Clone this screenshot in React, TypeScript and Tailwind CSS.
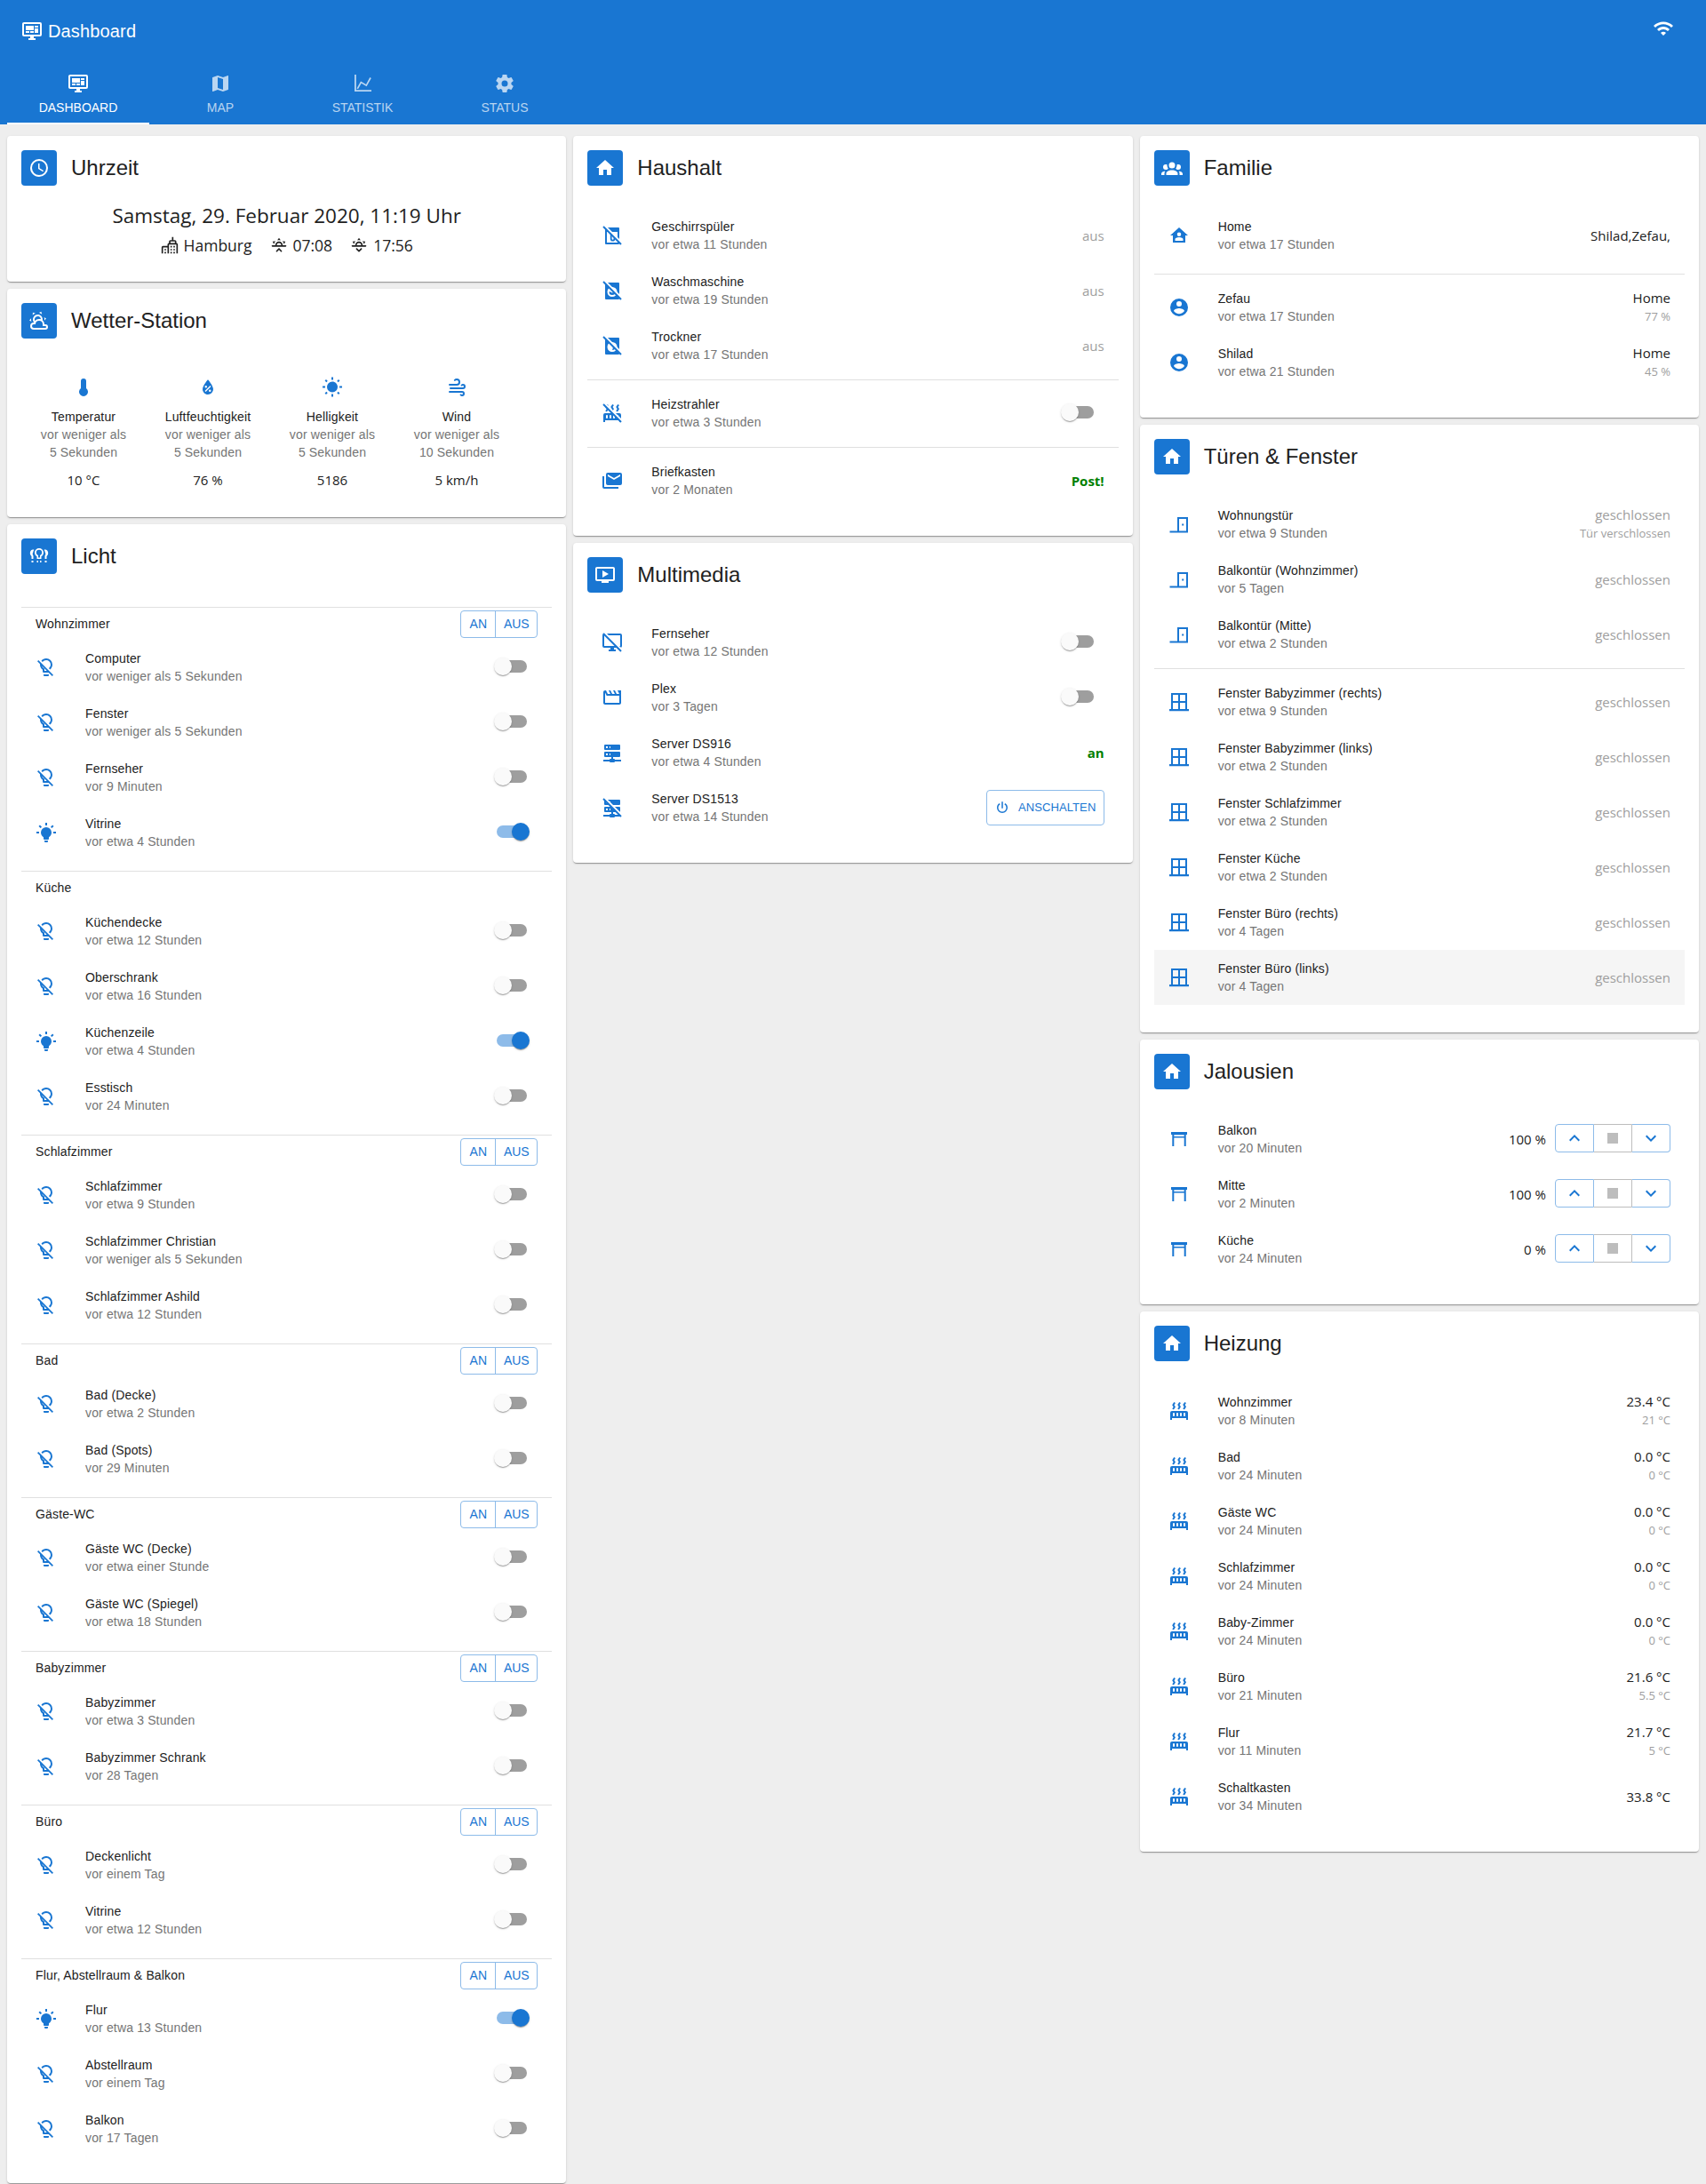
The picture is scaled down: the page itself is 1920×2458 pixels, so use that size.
import React from 'react'

const P = {
  dashboard: 'M21,16V4H3V16H21M21,2A2,2 0 0,1 23,4V16A2,2 0 0,1 21,18H14V20H16V22H8V20H10V18H3C1.89,18 1,17.1 1,16V4C1,2.89 1.89,2 3,2H21M5,6H14V11H5V6M15,6H19V8H15V6M19,9V14H15V9H19M5,12H9V14H5V12M10,12H14V14H10V12Z',
  map: 'M15,19L9,16.89V5L15,7.11M20.5,3C20.44,3 20.39,3 20.34,3L15,5.1L9,3L3.36,4.9C3.15,4.97 3,5.15 3,5.38V20.5A0.5,0.5 0 0,0 3.5,21C3.55,21 3.61,21 3.66,20.97L9,18.9L15,21L20.64,19.1C20.85,19 21,18.85 21,18.62V3.5A0.5,0.5 0 0,0 20.5,3Z',
  chart: 'M3,2H4.8V19.2H22V21H3V2M5.5,17.4L10,9.5L16,13L20.3,5L21.8,5.9L16.6,15.2L10.7,11.8L7,18.3L5.5,17.4Z',
  cog: 'M12,15.5A3.5,3.5 0 0,1 8.5,12A3.5,3.5 0 0,1 12,8.5A3.5,3.5 0 0,1 15.5,12A3.5,3.5 0 0,1 12,15.5M19.43,12.97C19.47,12.65 19.5,12.33 19.5,12C19.5,11.67 19.47,11.34 19.43,11L21.54,9.37C21.73,9.22 21.78,8.95 21.66,8.73L19.66,5.27C19.54,5.05 19.27,4.96 19.05,5.05L16.56,6.05C16.04,5.66 15.5,5.32 14.87,5.07L14.5,2.42C14.46,2.18 14.25,2 14,2H10C9.75,2 9.54,2.18 9.5,2.42L9.13,5.07C8.5,5.32 7.96,5.66 7.44,6.05L4.95,5.05C4.73,4.96 4.46,5.05 4.34,5.27L2.34,8.73C2.21,8.95 2.27,9.22 2.46,9.37L4.57,11C4.53,11.34 4.5,11.67 4.5,12C4.5,12.33 4.53,12.65 4.57,12.97L2.46,14.63C2.27,14.78 2.21,15.05 2.34,15.27L4.34,18.73C4.46,18.95 4.73,19.03 4.95,18.95L7.44,17.94C7.96,18.34 8.5,18.68 9.13,18.93L9.5,21.58C9.54,21.82 9.75,22 10,22H14C14.25,22 14.46,21.82 14.5,21.58L14.87,18.93C15.5,18.67 16.04,18.34 16.56,17.94L19.05,18.95C19.27,19.03 19.54,18.95 19.66,18.73L21.66,15.27C21.78,15.05 21.73,14.78 21.54,14.63L19.43,12.97Z',
  wifi: 'M1 9l2 2c4.97-4.97 13.03-4.97 18 0l2-2C16.93 2.93 7.08 2.93 1 9zm8 8l3 3 3-3c-1.65-1.66-4.34-1.66-6 0zm-4-4l2 2c2.76-2.76 7.24-2.76 10 0l2-2C15.14 9.14 8.87 9.14 5 13z',
  clock: 'M12,20A8,8 0 0,0 20,12A8,8 0 0,0 12,4A8,8 0 0,0 4,12A8,8 0 0,0 12,20M12,2A10,10 0 0,1 22,12A10,10 0 0,1 12,22C6.47,22 2,17.5 2,12A10,10 0 0,1 12,2M12.5,7V12.25L17,14.92L16.25,16.15L11,13V7H12.5Z',
  home: 'M10,20V14H14V20H19V12H22L12,3L2,12H5V20H10Z',
  person: 'M12,19.2C9.5,19.2 7.29,17.92 6,16C6.03,14 10,12.9 12,12.9C14,12.9 17.97,14 18,16C16.71,17.92 14.5,19.2 12,19.2M12,5A3,3 0 0,1 15,8A3,3 0 0,1 12,11A3,3 0 0,1 9,8A3,3 0 0,1 12,5M12,2A10,10 0 0,0 2,12A10,10 0 0,0 12,22A10,10 0 0,0 22,12A10,10 0 0,0 12,2Z',
  group: 'M12,5.5A3.5,3.5 0 0,1 15.5,9A3.5,3.5 0 0,1 12,12.5A3.5,3.5 0 0,1 8.5,9A3.5,3.5 0 0,1 12,5.5M5,8C5.56,8 6.08,8.15 6.53,8.42C6.38,9.85 6.8,11.27 7.66,12.38C7.16,13.34 6.16,14 5,14A3,3 0 0,1 2,11A3,3 0 0,1 5,8M19,8A3,3 0 0,1 22,11A3,3 0 0,1 19,14C17.84,14 16.84,13.34 16.34,12.38C17.2,11.27 17.62,9.85 17.47,8.42C17.92,8.15 18.44,8 19,8M5.5,18.25C5.5,16.18 8.41,14.5 12,14.5C15.59,14.5 18.5,16.18 18.5,18.25V20H5.5V18.25M0,20V18.5C0,17.11 1.89,15.94 4.45,15.6C3.86,16.28 3.5,17.22 3.5,18.25V20H0M24,20H20.5V18.25C20.5,17.22 20.14,16.28 19.55,15.6C22.11,15.94 24,17.11 24,18.5V20Z',
  homeAccount: 'M12 3L2 12h3v8h14v-8h3L12 3zM12 8.5a2.25 2.25 0 1 1 0 4.5 2.25 2.25 0 0 1 0-4.5zM12 14c2.5 0 4.5 1 4.5 2.25V18h-9v-1.75C7.5 15 9.5 14 12 14z',
  thermometer: 'M15 13V5A3 3 0 0 0 9 5V13A5 5 0 1 0 15 13Z',
  water: 'M12,3.25C12,3.25 6,10 6,14C6,17.32 8.69,20 12,20A6,6 0 0,0 18,14C18,10 12,3.25 12,3.25M14.47,9.97L15.53,11.03L9.53,17.03L8.47,15.97M9.75,10A1.25,1.25 0 0,1 11,11.25A1.25,1.25 0 0,1 9.75,12.5A1.25,1.25 0 0,1 8.5,11.25A1.25,1.25 0 0,1 9.75,10M14.25,14.5A1.25,1.25 0 0,1 15.5,15.75A1.25,1.25 0 0,1 14.25,17A1.25,1.25 0 0,1 13,15.75A1.25,1.25 0 0,1 14.25,14.5Z',
  sunny: 'M3.55,18.54L4.96,19.95L6.76,18.16L5.34,16.74M11,22.45C11.32,22.45 13,22.45 13,22.45V19.5H11M12,5.5A6,6 0 0,0 6,11.5A6,6 0 0,0 12,17.5A6,6 0 0,0 18,11.5C18,8.18 15.31,5.5 12,5.5M20,12.5H23V10.5H20M17.24,18.16L19.04,19.95L20.45,18.54L18.66,16.74M20.45,4.46L19.04,3.05L17.24,4.84L18.66,6.26M13,0.55H11V3.5H13M4,10.5H1V12.5H4M6.76,4.84L4.96,3.05L3.55,4.46L5.34,6.26L6.76,4.84Z',
  windy: 'M4,10A1,1 0 0,1 3,9A1,1 0 0,1 4,8H12A2,2 0 0,0 14,6A2,2 0 0,0 12,4C11.45,4 10.95,4.22 10.59,4.59C10.2,5 9.56,5 9.17,4.59C8.78,4.2 8.78,3.56 9.17,3.17C9.9,2.45 10.9,2 12,2A4,4 0 0,1 16,6A4,4 0 0,1 12,10H4M19,12A1,1 0 0,0 20,11A1,1 0 0,0 19,10C18.72,10 18.47,10.11 18.29,10.29C17.9,10.68 17.27,10.68 16.88,10.29C16.5,9.9 16.5,9.27 16.88,8.88C17.42,8.34 18.17,8 19,8A3,3 0 0,1 22,11A3,3 0 0,1 19,14H5A1,1 0 0,1 4,13A1,1 0 0,1 5,12H19M18,18H4A1,1 0 0,1 3,17A1,1 0 0,1 4,16H18A3,3 0 0,1 21,19A3,3 0 0,1 18,22C17.17,22 16.42,21.66 15.88,21.12C15.5,20.73 15.5,20.1 15.88,19.71C16.27,19.32 16.9,19.32 17.29,19.71C17.47,19.89 17.72,20 18,20A1,1 0 0,0 19,19A1,1 0 0,0 18,18Z',
  partly: 'M12.74,5.47C15.1,6.5 16.35,9.03 15.92,11.46C17.19,12.56 18,14.19 18,16V16.17C18.31,16.06 18.65,16 19,16A3,3 0 0,1 22,19A3,3 0 0,1 19,22H6A4,4 0 0,1 2,18A4,4 0 0,1 6,14H6.27C5,12.45 4.6,10.24 5.5,8.26C6.72,5.5 9.97,4.24 12.74,5.47M11.93,7.3C10.16,6.5 8.09,7.31 7.31,9.07C6.85,10.09 6.93,11.25 7.41,12.17C8.5,10.83 10.16,10 12,10C12.7,10 13.38,10.12 14,10.34C13.94,9.06 13.18,7.86 11.93,7.3M13.55,3.64C13,3.4 12.45,3.23 11.88,3.12L14.37,1.82L15.27,4.71C14.76,4.29 14.19,3.93 13.55,3.64M6.09,4.44C5.6,4.79 5.17,5.19 4.8,5.63L4.91,2.82L7.87,3.5C7.25,3.71 6.65,4.03 6.09,4.44M18,9.71C17.91,9.12 17.78,8.55 17.59,8L19.97,9.5L17.92,11.73C18.03,11.08 18.05,10.4 18,9.71M3.04,11.3C3.11,11.9 3.24,12.47 3.43,13L1.06,11.5L3.1,9.28C3,9.93 2.97,10.61 3.04,11.3M19,18H16V16A4,4 0 0,0 12,12A4,4 0 0,0 8,16H6A2,2 0 0,0 4,18A2,2 0 0,0 6,20H19A1,1 0 0,0 20,19A1,1 0 0,0 19,18Z',
  bulbOn: 'M12,6A6,6 0 0,1 18,12C18,14.22 16.79,16.16 15,17.2V19A1,1 0 0,1 14,20H10A1,1 0 0,1 9,19V17.2C7.21,16.16 6,14.22 6,12A6,6 0 0,1 12,6M14,21V22A1,1 0 0,1 13,23H11A1,1 0 0,1 10,22V21H14M20,11H23V13H20V11M1,11H4V13H1V11M13,1V4H11V1H13M4.92,3.5L7.05,5.64L5.63,7.05L3.5,4.93L4.92,3.5M16.95,5.63L19.07,3.5L20.5,4.93L18.37,7.05L16.95,5.63Z',
  bulbOff: 'M12,2C9.76,2 7.78,3.05 6.5,4.68L7.93,6.11C8.84,4.84 10.32,4 12,4A5,5 0 0,1 17,9C17,10.68 16.16,12.16 14.89,13.06L16.31,14.5C17.94,13.21 19,11.24 19,9A7,7 0 0,0 12,2M3.28,4L2,5.27L5.04,8.3C5,8.53 5,8.76 5,9C5,11.38 6.19,13.47 8,14.74V17A1,1 0 0,0 9,18H14.73L18.73,22L20,20.72L3.28,4M7.23,10.5L12.73,16H10V13.58C8.68,13.04 7.66,11.9 7.23,10.5M9,20V21A1,1 0 0,0 10,22H14A1,1 0 0,0 15,21V20H9Z',
  bulbs: 'M12,3A5,5 0 0,1 17,8C17,9.9 16,11.5 14.5,12.3V15H9.5V12.3C8,11.5 7,9.9 7,8A5,5 0 0,1 12,3M12,4.8A3.2,3.2 0 0,0 8.8,8C8.8,9.3 9.6,10.5 11,11V13.4H13V11C14.4,10.5 15.2,9.3 15.2,8A3.2,3.2 0 0,0 12,4.8M5,4.5C5.5,4.5 6,4.6 6.4,4.8C5.8,5.6 5.4,6.6 5.3,7.6C4.4,8.8 4.5,10.5 5.5,11.6V15H3.5V11.9C2,10.9 1.5,8.9 2,7.2C2.5,5.6 3.6,4.5 5,4.5M19,4.5C20.4,4.5 21.5,5.6 22,7.2C22.5,8.9 22,10.9 20.5,11.9V15H18.5V11.6C19.5,10.5 19.6,8.8 18.7,7.6C18.6,6.6 18.2,5.6 17.6,4.8C18,4.6 18.5,4.5 19,4.5M3.5,17H5.5V19H3.5V17M9.5,17H11V19H9.5V17M13,17H14.5V19H13V17M18.5,17H20.5V19H18.5V17Z',
  dishwasher: 'M5 3h14a1 1 0 0 1 1 1v17a1 1 0 0 1-1 1H5a1 1 0 0 1-1-1V4a1 1 0 0 1 1-1zM6 8v12h12V8H6zM9.8 10.5h1.8v5.2a1 1 0 0 0 2 0V15h1.8v.8a2.8 2.8 0 0 1-5.6 0v-5.3z',
  washer: 'M5 3h14a1 1 0 0 1 1 1v17a1 1 0 0 1-1 1H5a1 1 0 0 1-1-1V4a1 1 0 0 1 1-1zM12 8a5.5 5.5 0 1 0 0 11 5.5 5.5 0 0 0 0-11zM8.5 13.5c1.5-1 2.5 1 3.5 1s2-2 3.5-1a3.5 3.5 0 0 1-7 0z',
  dryer: 'M5 3h14a1 1 0 0 1 1 1v17a1 1 0 0 1-1 1H5a1 1 0 0 1-1-1V4a1 1 0 0 1 1-1zM12 8a5.5 5.5 0 1 0 0 11 5.5 5.5 0 0 0 0-11zM12 10a3.5 3.5 0 0 1 0 7c1.2-2 1.2-5 0-7z',
  radiator: 'M7.95,3L6.53,5.19L7.95,7.4H7.94L5.95,10.5L4.22,9.6L5.64,7.39L4.22,5.19L6.22,2.09L7.95,3M13.95,2.89L12.53,5.1L13.95,7.3L13.94,7.31L11.95,10.4L10.22,9.5L11.64,7.3L10.22,5.1L12.22,2L13.95,2.89M20,2.89L18.56,5.1L20,7.3V7.31L18,10.4L16.25,9.5L17.67,7.3L16.25,5.1L18.25,2L20,2.89M2,22V14A2,2 0 0,1 4,12H20A2,2 0 0,1 22,14V22H20V20H4V22H2M6,14A1,1 0 0,0 5,15V17A1,1 0 0,0 6,18A1,1 0 0,0 7,17V15A1,1 0 0,0 6,14M10,14A1,1 0 0,0 9,15V17A1,1 0 0,0 10,18A1,1 0 0,0 11,17V15A1,1 0 0,0 10,14M14,14A1,1 0 0,0 13,15V17A1,1 0 0,0 14,18A1,1 0 0,0 15,17V15A1,1 0 0,0 14,14M18,14A1,1 0 0,0 17,15V17A1,1 0 0,0 18,18A1,1 0 0,0 19,17V15A1,1 0 0,0 18,14Z',
  mail: 'M21,3H7A2,2 0 0,0 5,5V15A2,2 0 0,0 7,17H21A2,2 0 0,0 23,15V5A2,2 0 0,0 21,3M21,7L14,11L7,7V5L14,9L21,5V7M3,19V7H1V19A2,2 0 0,0 3,21H19V19H3Z',
  monitor: 'M21 4v12H3V4h18m0-2H3a2 2 0 0 0-2 2v12a2 2 0 0 0 2 2h7v2H8v2h8v-2h-2v-2h7a2 2 0 0 0 2-2V4a2 2 0 0 0-2-2z',
  movie: 'M4 6.47L5.76 10H20V18H4V6.47M22 4H18L20 8H17L15 4H13L15 8H12L10 4H8L10 8H7L5 4H4C2.9 4 2 4.9 2 6V18C2 19.1 2.9 20 4 20H20C21.1 20 22 19.1 22 18V4Z',
  server: 'M13,19H14A1,1 0 0,1 15,20H22V22H15A1,1 0 0,1 14,23H10A1,1 0 0,1 9,22H2V20H9A1,1 0 0,1 10,19H11V17H4A1,1 0 0,1 3,16V12A1,1 0 0,1 4,11H20A1,1 0 0,1 21,12V16A1,1 0 0,1 20,17H13V19M4,3H20A1,1 0 0,1 21,4V8A1,1 0 0,1 20,9H4A1,1 0 0,1 3,8V4A1,1 0 0,1 4,3M9,7H10V5H9V7M9,15H10V13H9V15M5,5V7H7V5H5M5,13V15H7V13H5Z',
  power: 'M16.56,5.44L15.11,6.89C16.84,7.94 18,9.83 18,12A6,6 0 0,1 12,18A6,6 0 0,1 6,12C6,9.83 7.16,7.94 8.88,6.88L7.44,5.44C5.36,6.88 4,9.28 4,12A8,8 0 0,0 12,20A8,8 0 0,0 20,12C20,9.28 18.64,6.88 16.56,5.44M13,3H11V13H13',
  door: 'M1.5 19.5H10V4h12v15.5h0V21.5H1.5V19.5zM12 6v13.5h8V6h-8zM15.2 11.6h2v2h-2z',
  window: 'M3 2h18v18h2v2.2H1V20h2V2zM5 4v7h6V4H5zM13 4v7h6V4h-6zM5 13v7h6v-7H5zM13 13v7h6v-7h-6z',
  blinds: 'M3 4h18v3h-1.3v13h-2V10.6H6.3V20h-2V7H3V4zM6.3 7.2v1.8h11.4V7.2H6.3z',
  up: 'M7.41,15.41L12,10.83L16.59,15.41L18,14L12,8L6,14L7.41,15.41Z',
  down: 'M7.41,8.58L12,13.17L16.59,8.58L18,10L12,16L6,10L7.41,8.58Z',
  stop: 'M18,18H6V6H18V18Z',
  tv: 'M21,3H3C1.89,3 1,3.89 1,5V17A2,2 0 0,0 3,19H8V21H16V19H21A2,2 0 0,0 23,17V5C23,3.89 22.1,3 21,3M21,17H3V5H21M16,11L9,15V7',
  sunrise: 'M3,12H7A5,5 0 0,1 12,7A5,5 0 0,1 17,12H21A1,1 0 0,1 22,13A1,1 0 0,1 21,14H3A1,1 0 0,1 2,13A1,1 0 0,1 3,12M15,12A3,3 0 0,0 12,9A3,3 0 0,0 9,12H15M12,2L14.39,5.42C13.65,5.15 12.84,5 12,5C11.16,5 10.35,5.15 9.61,5.42L12,2M3.34,7L7.5,6.65C6.9,7.16 6.36,7.78 5.94,8.5C5.5,9.24 5.25,10 5.11,10.79L3.34,7M20.65,7L18.88,10.79C18.74,10 18.47,9.23 18.05,8.5C17.63,7.78 17.1,7.15 16.5,6.64L20.65,7M12.71,16.3L15.82,19.41C16.21,19.8 16.21,20.43 15.82,20.82C15.43,21.21 14.8,21.21 14.41,20.82L12,18.41L9.59,20.82C9.2,21.21 8.57,21.21 8.18,20.82C7.79,20.43 7.79,19.8 8.18,19.41L11.29,16.3C11.5,16.1 11.74,16 12,16C12.26,16 12.5,16.1 12.71,16.3Z',
  sunset: 'M3,12H7A5,5 0 0,1 12,7A5,5 0 0,1 17,12H21A1,1 0 0,1 22,13A1,1 0 0,1 21,14H3A1,1 0 0,1 2,13A1,1 0 0,1 3,12M15,12A3,3 0 0,0 12,9A3,3 0 0,0 9,12H15M12,2L14.39,5.42C13.65,5.15 12.84,5 12,5C11.16,5 10.35,5.15 9.61,5.42L12,2M3.34,7L7.5,6.65C6.9,7.16 6.36,7.78 5.94,8.5C5.5,9.24 5.25,10 5.11,10.79L3.34,7M20.65,7L18.88,10.79C18.74,10 18.47,9.23 18.05,8.5C17.63,7.78 17.1,7.15 16.5,6.64L20.65,7M12.71,20.71L15.82,17.6C16.21,17.21 16.21,16.57 15.82,16.18C15.43,15.79 14.8,15.79 14.41,16.18L12,18.59L9.59,16.18C9.2,15.79 8.57,15.79 8.18,16.18C7.79,16.57 7.79,17.21 8.18,17.6L11.29,20.71C11.5,20.9 11.74,21 12,21C12.26,21 12.5,20.9 12.71,20.71Z',
  city: 'M15,23H13V21H15V23M19,21H17V23H19V21M15,17H13V19H15V17M7,21H5V23H7V21M7,17H5V19H7V17M19,17H17V19H19V17M15,13H13V15H15V13M19,13H17V15H19V13M21,9A2,2 0 0,1 23,11V23H21V11H11V23H9V15H3V23H1V15A2,2 0 0,1 3,13H9V11A2,2 0 0,1 11,9V7A2,2 0 0,1 13,5H15V1H17V5H19A2,2 0 0,1 21,7V9M19,9V7H13V9H19Z',
}

type IconName = keyof typeof P

function Icon({ name, size = 24, off, className }: { name: IconName, size?: number, off?: boolean, className?: string }) {
  return (
    <svg width={size} height={size} viewBox="0 0 24 24" fill="currentColor" fillRule="evenodd" className={className}>
      <path d={P[name]} />
      {off && <path d="M3.6 1.4L23.6 21.4" stroke="#fff" strokeWidth="2.6" />}
      {off && <path d="M2 2L22 22" stroke="currentColor" strokeWidth="1.9" />}
    </svg>
  )
}

const opensans = "font-['Open_Sans',sans-serif]"

function Card({ icon, title, children, pad = 'pb-[31px]' }: { icon: IconName, title: string, children: React.ReactNode, pad?: string }) {
  return (
    <div className={`bg-white rounded p-4 shadow-[0_2px_1px_-1px_rgba(0,0,0,0.2),0_1px_1px_0_rgba(0,0,0,0.14),0_1px_3px_0_rgba(0,0,0,0.12)] ${pad}`}>
      <div className="flex items-center h-10">
        <div className="w-10 h-10 rounded bg-[#1976d2] text-white grid place-content-center">
          <Icon name={icon} />
        </div>
        <h2 className="ml-4 text-2xl leading-8 text-[#212121]">{title}</h2>
      </div>
      {children}
    </div>
  )
}

function Row({ icon, off, name, sub, hover, children }: { icon: IconName, off?: boolean, name: string, sub: string, hover?: boolean, children?: React.ReactNode }) {
  return (
    <div className={`h-[62px] flex items-center px-4 ${hover ? 'bg-[#f5f5f5]' : ''}`}>
      <div className="w-14 shrink-0 text-[#1976d2]">
        <Icon name={icon} off={off} />
      </div>
      <div className="flex-1 text-sm leading-5 tracking-[0.15px]">
        <div className="text-[#212121]">{name}</div>
        <div className="text-[#757575]">{sub}</div>
      </div>
      {children}
    </div>
  )
}

function Toggle({ on }: { on?: boolean }) {
  return (
    <div className="relative w-[58px] h-[38px] shrink-0 mb-0.5">
      <div className={`absolute left-3 top-3 w-[34px] h-3.5 rounded-full ${on ? 'bg-[#8dbbe9]' : 'bg-[#9e9e9e]'}`} />
      <div className={`absolute top-[9px] w-5 h-5 rounded-full shadow-[0_2px_1px_-1px_rgba(0,0,0,0.2),0_1px_1px_0_rgba(0,0,0,0.14),0_1px_3px_0_rgba(0,0,0,0.12)] ${on ? 'left-[29px] bg-[#1976d2]' : 'left-[9px] bg-[#fafafa]'}`} />
    </div>
  )
}

function Value({ main, sub, muted }: { main: string, sub?: string, muted?: boolean }) {
  return (
    <div className={`text-right ${opensans}`}>
      <div className={`text-[15px] leading-[21px] ${muted ? 'text-[#9e9e9e]' : 'text-[#212121]'}`}>{main}</div>
      {sub && <div className="text-[13px] leading-[21px] text-[#9e9e9e]">{sub}</div>}
    </div>
  )
}

function Green({ children }: { children: React.ReactNode }) {
  return <div className={`text-[15px] font-bold text-[#008000] mt-px ${opensans}`}>{children}</div>
}

function Divider() {
  return <div className="h-px bg-[#e0e0e0] mt-[7px] mb-1.5" />
}

const rooms: { name: string, buttons: boolean, rows: [string, string, boolean?][] }[] = [
  { name: 'Wohnzimmer', buttons: true, rows: [['Computer', 'vor weniger als 5 Sekunden'], ['Fenster', 'vor weniger als 5 Sekunden'], ['Fernseher', 'vor 9 Minuten'], ['Vitrine', 'vor etwa 4 Stunden', true]] },
  { name: 'Küche', buttons: false, rows: [['Küchendecke', 'vor etwa 12 Stunden'], ['Oberschrank', 'vor etwa 16 Stunden'], ['Küchenzeile', 'vor etwa 4 Stunden', true], ['Esstisch', 'vor 24 Minuten']] },
  { name: 'Schlafzimmer', buttons: true, rows: [['Schlafzimmer', 'vor etwa 9 Stunden'], ['Schlafzimmer Christian', 'vor weniger als 5 Sekunden'], ['Schlafzimmer Ashild', 'vor etwa 12 Stunden']] },
  { name: 'Bad', buttons: true, rows: [['Bad (Decke)', 'vor etwa 2 Stunden'], ['Bad (Spots)', 'vor 29 Minuten']] },
  { name: 'Gäste-WC', buttons: true, rows: [['Gäste WC (Decke)', 'vor etwa einer Stunde'], ['Gäste WC (Spiegel)', 'vor etwa 18 Stunden']] },
  { name: 'Babyzimmer', buttons: true, rows: [['Babyzimmer', 'vor etwa 3 Stunden'], ['Babyzimmer Schrank', 'vor 28 Tagen']] },
  { name: 'Büro', buttons: true, rows: [['Deckenlicht', 'vor einem Tag'], ['Vitrine', 'vor etwa 12 Stunden']] },
  { name: 'Flur, Abstellraum & Balkon', buttons: true, rows: [['Flur', 'vor etwa 13 Stunden', true], ['Abstellraum', 'vor einem Tag'], ['Balkon', 'vor 17 Tagen']] },
]

const weather: [IconName, string, string, string][] = [
  ['thermometer', 'Temperatur', '5 Sekunden', '10 °C'],
  ['water', 'Luftfeuchtigkeit', '5 Sekunden', '76 %'],
  ['sunny', 'Helligkeit', '5 Sekunden', '5186'],
  ['windy', 'Wind', '10 Sekunden', '5 km/h'],
]

const windows: [string, string][] = [
  ['Fenster Babyzimmer (rechts)', 'vor etwa 9 Stunden'],
  ['Fenster Babyzimmer (links)', 'vor etwa 2 Stunden'],
  ['Fenster Schlafzimmer', 'vor etwa 2 Stunden'],
  ['Fenster Küche', 'vor etwa 2 Stunden'],
  ['Fenster Büro (rechts)', 'vor 4 Tagen'],
  ['Fenster Büro (links)', 'vor 4 Tagen'],
]

const heating: [string, string, string, string?][] = [
  ['Wohnzimmer', 'vor 8 Minuten', '23.4 °C', '21 °C'],
  ['Bad', 'vor 24 Minuten', '0.0 °C', '0 °C'],
  ['Gäste WC', 'vor 24 Minuten', '0.0 °C', '0 °C'],
  ['Schlafzimmer', 'vor 24 Minuten', '0.0 °C', '0 °C'],
  ['Baby-Zimmer', 'vor 24 Minuten', '0.0 °C', '0 °C'],
  ['Büro', 'vor 21 Minuten', '21.6 °C', '5.5 °C'],
  ['Flur', 'vor 11 Minuten', '21.7 °C', '5 °C'],
  ['Schaltkasten', 'vor 34 Minuten', '33.8 °C'],
]

const blinds: [string, string, string][] = [
  ['Balkon', 'vor 20 Minuten', '100 %'],
  ['Mitte', 'vor 2 Minuten', '100 %'],
  ['Küche', 'vor 24 Minuten', '0 %'],
]

const tabs: [IconName, string][] = [['dashboard', 'DASHBOARD'], ['map', 'MAP'], ['chart', 'STATISTIK'], ['cog', 'STATUS']]

function BlindControls() {
  return (
    <div className="flex h-8 w-[130px] ml-[10px] mb-0.5 text-[#1976d2]">
      <div className="flex-1 grid place-content-center border border-[#8dbbe9] rounded-l"><Icon name="up" /></div>
      <div className="flex-1 grid place-content-center border-y border-[#bdbdbd] text-[#bdbdbd]"><Icon name="stop" /></div>
      <div className="flex-1 grid place-content-center border border-[#8dbbe9] border-l-[#bdbdbd] rounded-r"><Icon name="down" /></div>
    </div>
  )
}

export default function App() {
  return (
    <div className="min-h-screen bg-[#eeeeee] font-['Liberation_Sans',Arial,sans-serif]">
      <header className="h-[140px] bg-[#1976d2] text-white">
        <div className="h-[68px] flex pl-6 pr-9">
          <div className="flex items-center h-[70px] flex-1 text-xl tracking-[0.15px]">
            <Icon name="dashboard" className="mr-1.5" />
            <span>Dashboard</span>
          </div>
          <Icon name="wifi" className="mt-5" />
        </div>
        <div className="flex pl-2">
          {tabs.map(([icon, label], i) => (
            <div key={label} className={`w-40 h-[72px] flex flex-col items-center pt-3.5 border-b-2 ${i === 0 ? 'border-white' : 'border-transparent text-white/70'}`}>
              <Icon name={icon} />
              <span className="text-sm leading-5 mt-[5px]">{label}</span>
            </div>
          ))}
        </div>
      </header>

      <main className="grid grid-cols-3 px-1 pt-[13px]">
        <div className="px-1 flex flex-col gap-2">
          <Card icon="clock" title="Uhrzeit" pad="pb-6">
            <div className={`mt-[18px] text-center text-[#212121] ${opensans}`}>
              <div className="text-[22.5px] leading-8">Samstag, 29. Februar 2020, 11:19 Uhr</div>
              <div className="flex items-center justify-center h-[34px] text-[17.5px]">
                <Icon name="city" size={20} />
                <span className="ml-1.5">Hamburg</span>
                <Icon name="sunrise" size={20} className="ml-5" />
                <span className="ml-1.5">07:08</span>
                <Icon name="sunset" size={20} className="ml-5" />
                <span className="ml-1.5">17:56</span>
              </div>
            </div>
          </Card>

          <Card icon="partly" title="Wetter-Station" pad="pb-8">
            <div className="flex mt-[43px]">
              {weather.map(([icon, name, sub, value]) => (
                <div key={name} className="w-[140px] flex flex-col items-center text-sm leading-5 tracking-[0.15px]">
                  <Icon name={icon} className="text-[#1976d2] mb-[11px]" />
                  <div className="text-[#212121]">{name}</div>
                  <div className="text-[#757575] text-center">vor weniger als<br />{sub}</div>
                  <div className={`mt-[11px] text-[15px] tracking-normal text-[#212121] ${opensans}`}>{value}</div>
                </div>
              ))}
            </div>
          </Card>

          <Card icon="bulbs" title="Licht" pad="pb-[30px]">
            <div className="mt-[37px]">
              {rooms.map((room, i) => (
                <div key={room.name} className={i > 0 ? 'mt-3' : ''}>
                  <div className="h-px bg-[#e0e0e0]" />
                  <div className="h-9 flex items-center justify-between px-4 text-sm tracking-[0.15px] text-[#212121]">
                    <span>{room.name}</span>
                    {room.buttons && (
                      <div className="flex h-[31px] text-sm tracking-normal text-[#1976d2] border border-[#8dbbe9] rounded">
                        <div className="w-[39px] grid place-content-center border-r border-[#8dbbe9]">AN</div>
                        <div className="w-[46px] grid place-content-center">AUS</div>
                      </div>
                    )}
                  </div>
                  {room.rows.map(([name, sub, on]) => (
                    <Row key={name} icon={on ? 'bulbOn' : 'bulbOff'} name={name} sub={sub}>
                      <Toggle on={on} />
                    </Row>
                  ))}
                </div>
              ))}
            </div>
          </Card>
        </div>

        <div className="px-1 flex flex-col gap-2 items-stretch">
          <Card icon="home" title="Haushalt">
            <div className="mt-[25px]">
              <Row icon="dishwasher" off name="Geschirrspüler" sub="vor etwa 11 Stunden"><Value main="aus" muted /></Row>
              <Row icon="washer" off name="Waschmaschine" sub="vor etwa 19 Stunden"><Value main="aus" muted /></Row>
              <Row icon="dryer" off name="Trockner" sub="vor etwa 17 Stunden"><Value main="aus" muted /></Row>
              <Divider />
              <Row icon="radiator" off name="Heizstrahler" sub="vor etwa 3 Stunden"><Toggle /></Row>
              <Divider />
              <Row icon="mail" name="Briefkasten" sub="vor 2 Monaten"><Green>Post!</Green></Row>
            </div>
          </Card>

          <Card icon="tv" title="Multimedia">
            <div className="mt-[25px]">
              <Row icon="monitor" off name="Fernseher" sub="vor etwa 12 Stunden"><Toggle /></Row>
              <Row icon="movie" name="Plex" sub="vor 3 Tagen"><Toggle /></Row>
              <Row icon="server" name="Server DS916" sub="vor etwa 4 Stunden"><Green>an</Green></Row>
              <Row icon="server" off name="Server DS1513" sub="vor etwa 14 Stunden">
                <button className="h-10 w-[133px] flex items-center justify-center gap-[9px] rounded border border-[#8dbbe9] text-[#1976d2] text-[13px] tracking-[0.1px]">
                  <Icon name="power" size={18} />
                  ANSCHALTEN
                </button>
              </Row>
            </div>
          </Card>
        </div>

        <div className="px-1 flex flex-col gap-2">
          <Card icon="group" title="Familie">
            <div className="mt-[25px]">
              <div className="mb-3">
                <Row icon="homeAccount" name="Home" sub="vor etwa 17 Stunden"><Value main="Shilad,Zefau," /></Row>
              </div>
              <div className="h-px bg-[#e0e0e0] mb-1.5" />
              <Row icon="person" name="Zefau" sub="vor etwa 17 Stunden"><Value main="Home" sub="77 %" /></Row>
              <Row icon="person" name="Shilad" sub="vor etwa 21 Stunden"><Value main="Home" sub="45 %" /></Row>
            </div>
          </Card>

          <Card icon="home" title="Türen & Fenster">
            <div className="mt-[25px]">
              <Row icon="door" name="Wohnungstür" sub="vor etwa 9 Stunden"><Value main="geschlossen" sub="Tür verschlossen" muted /></Row>
              <Row icon="door" name="Balkontür (Wohnzimmer)" sub="vor 5 Tagen"><Value main="geschlossen" muted /></Row>
              <Row icon="door" name="Balkontür (Mitte)" sub="vor etwa 2 Stunden"><Value main="geschlossen" muted /></Row>
              <Divider />
              {windows.map(([name, sub], i) => (
                <Row key={name} icon="window" name={name} sub={sub} hover={i === 5}><Value main="geschlossen" muted /></Row>
              ))}
            </div>
          </Card>

          <Card icon="home" title="Jalousien">
            <div className="mt-[25px]">
              {blinds.map(([name, sub, value]) => (
                <Row key={name} icon="blinds" name={name} sub={sub}>
                  <Value main={value} />
                  <BlindControls />
                </Row>
              ))}
            </div>
          </Card>

          <Card icon="home" title="Heizung">
            <div className="mt-[25px]">
              {heating.map(([name, sub, value, target]) => (
                <Row key={name} icon="radiator" name={name} sub={sub}><Value main={value} sub={target} /></Row>
              ))}
            </div>
          </Card>
        </div>
      </main>
    </div>
  )
}
